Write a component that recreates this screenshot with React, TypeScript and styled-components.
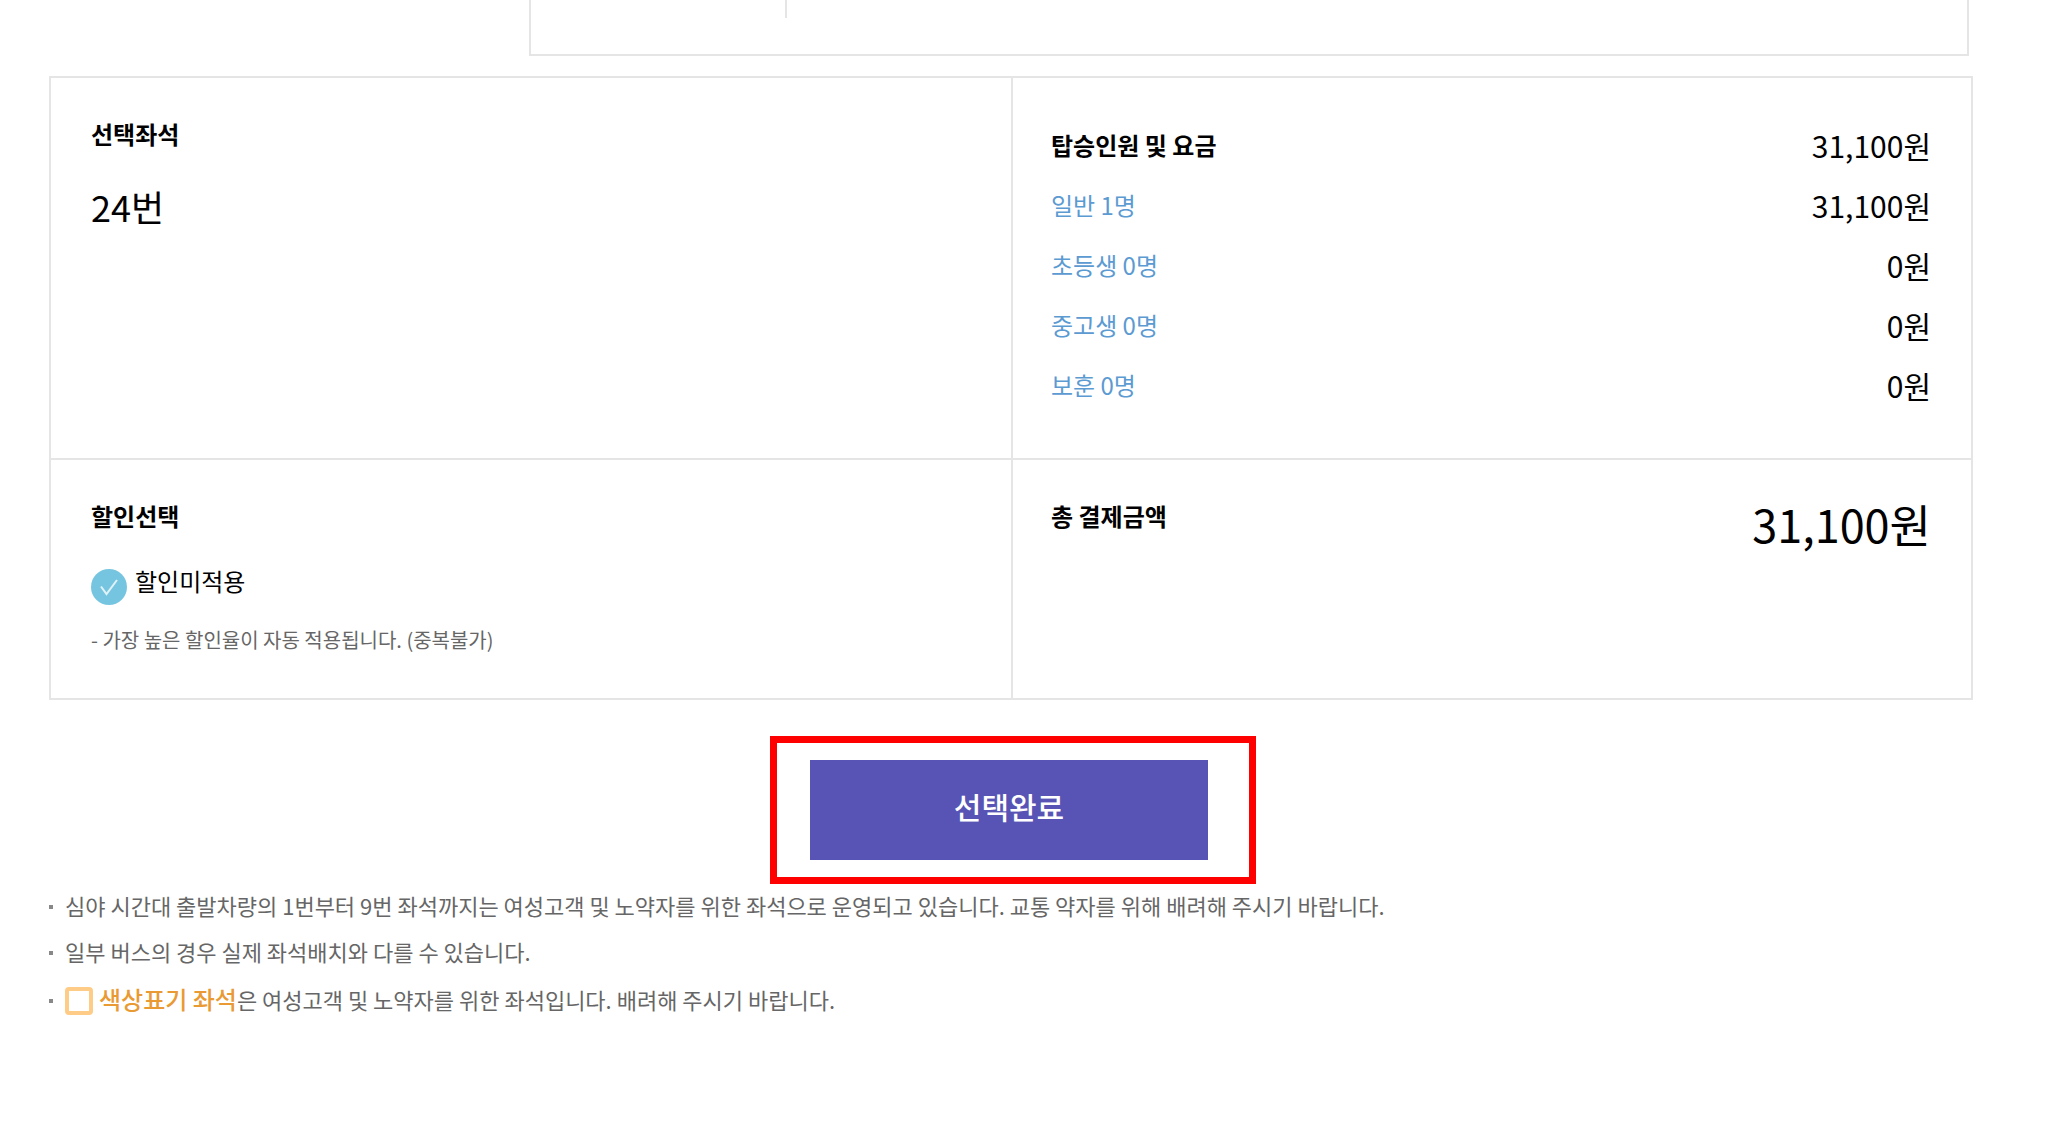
import React from "react";
import styled, { createGlobalStyle } from "styled-components";

const line = "#e5e5e5";

const GlobalStyle = createGlobalStyle`
  *, *::before, *::after { box-sizing: border-box; }
  body {
    margin: 0;
    background: #fff;
    color: #000;
    font-family: "Noto Sans CJK KR", "Noto Sans", sans-serif;
    font-size: 24px;
  }
`;

const Page = styled.main`
  padding: 0 75px 40px 49px;
`;

const SeatArea = styled.section`
  display: flex;
  height: 56px;
  margin: 0 4px 20px 480px;
  border: 2px solid ${line};
  border-top: 0;
`;

const SeatColumn = styled.div`
  width: 256px;
  height: 18px;
  border-right: 2px solid ${line};
`;

const Summary = styled.section`
  display: grid;
  grid-template-columns: 1fr 1fr;
  border: 2px solid ${line};
`;

const Cell = styled.div<{ $top?: boolean; $right?: boolean; $split?: boolean }>`
  display: ${(p) => (p.$split ? "flex" : "block")};
  justify-content: space-between;
  align-items: flex-start;
  padding: 38px 40px 42px ${(p) => (p.$right ? 38 : 40)}px;
  border-bottom: ${(p) => (p.$top ? `2px solid ${line}` : "0")};
  border-left: ${(p) => (p.$right ? `2px solid ${line}` : "0")};
`;

const Title = styled.h2`
  margin: 0;
  font-size: 24px;
  line-height: 36px;
  font-weight: 700;
`;

const Seat = styled.p`
  margin: 28px 0 0;
  font-size: 36px;
  line-height: 52px;
`;

const FareTable = styled.table`
  width: 100%;
  border-collapse: collapse;
`;

const FareRow = styled.tr<{ $total?: boolean }>`
  height: 60px;
  th,
  td {
    padding: 0 0 2px;
    line-height: 36px;
  }
  th {
    text-align: left;
    font-size: 24px;
    font-weight: ${(p) => (p.$total ? 700 : 400)};
    color: ${(p) => (p.$total ? "#000" : "#5c9ad2")};
  }
  td {
    text-align: right;
    font-size: 30px;
  }
`;

const Option = styled.label`
  display: flex;
  gap: 8px;
  width: max-content;
  height: 42px;
  margin-top: 29px;
  line-height: 36px;
  cursor: pointer;
`;

const OptionInput = styled.input`
  position: absolute;
  width: 36px;
  height: 36px;
  margin: 0;
  opacity: 0;
`;

const OptionMark = styled.svg`
  align-self: flex-end;
  width: 36px;
  height: 36px;
`;

const Hint = styled.p`
  margin: 19px 0 0;
  font-size: 20px;
  line-height: 32px;
  color: #666;
`;

const Total = styled.strong`
  font-size: 45px;
  line-height: 52px;
  font-weight: 400;
`;

const Actions = styled.div`
  display: flex;
  justify-content: center;
  margin-top: 60px;
  padding-right: 4px;
`;

const Highlight = styled.div`
  position: relative;
  &::after {
    content: "";
    position: absolute;
    inset: -24px -48px -24px -40px;
    border: 7px solid #f00;
    pointer-events: none;
  }
`;

const Submit = styled.button`
  display: block;
  width: 398px;
  height: 100px;
  padding: 0 0 8px;
  border: 0;
  background: #5754b5;
  color: #fff;
  font-family: inherit;
  font-size: 30px;
  font-weight: 500;
  cursor: pointer;
`;

const Notices = styled.ul`
  margin: 22px 0 0;
  padding: 0;
  list-style: none;
  font-size: 22px;
  color: #666;
`;

const Notice = styled.li<{ $tall?: boolean }>`
  display: flex;
  align-items: center;
  line-height: ${(p) => (p.$tall ? 50 : 46)}px;
  &::before {
    content: "";
    flex: none;
    width: 4px;
    height: 4px;
    margin: 4px 12px 0 0;
    background: #888;
  }
`;

const Swatch = styled.span`
  flex: none;
  width: 28px;
  height: 28px;
  margin: 4px 6px 0 0;
  border: 4px solid #ffcc87;
  border-radius: 4px;
`;

const Accent = styled.em`
  font-style: normal;
  font-weight: 500;
  font-size: 24px;
  color: #e99a33;
`;

const fares = [
  { label: "탑승인원 및 요금", price: "31,100원", total: true },
  { label: "일반 1명", price: "31,100원" },
  { label: "초등생 0명", price: "0원" },
  { label: "중고생 0명", price: "0원" },
  { label: "보훈 0명", price: "0원" },
];

export default function App() {
  return (
    <>
      <GlobalStyle />
      <Page>
        <SeatArea>
          <SeatColumn />
        </SeatArea>

        <Summary>
          <Cell $top>
            <Title>선택좌석</Title>
            <Seat>24번</Seat>
          </Cell>
          <Cell $top $right>
            <FareTable>
              <tbody>
                {fares.map((f) => (
                  <FareRow key={f.label} $total={f.total}>
                    <th scope="row">{f.label}</th>
                    <td>{f.price}</td>
                  </FareRow>
                ))}
              </tbody>
            </FareTable>
          </Cell>
          <Cell>
            <Title>할인선택</Title>
            <Option htmlFor="no-discount">
              <OptionInput type="radio" id="no-discount" name="discount" defaultChecked />
              <OptionMark viewBox="0 0 36 36" aria-hidden="true">
                <circle cx="18" cy="18" r="18" fill="#76c5e0" />
                <path d="M10 17.5 L15.5 25 L26 11" fill="none" stroke="#dff2f8" strokeWidth="2" />
              </OptionMark>
              할인미적용
            </Option>
            <Hint>- 가장 높은 할인율이 자동 적용됩니다. (중복불가)</Hint>
          </Cell>
          <Cell $right $split>
            <Title>총 결제금액</Title>
            <Total>31,100원</Total>
          </Cell>
        </Summary>

        <Actions>
          <Highlight>
            <Submit type="button">선택완료</Submit>
          </Highlight>
        </Actions>

        <Notices>
          <Notice>
            심야 시간대 출발차량의 1번부터 9번 좌석까지는 여성고객 및 노약자를 위한 좌석으로 운영되고 있습니다. 교통 약자를 위해 배려해 주시기 바랍니다.
          </Notice>
          <Notice>일부 버스의 경우 실제 좌석배치와 다를 수 있습니다.</Notice>
          <Notice $tall>
            <Swatch />
            <span>
              <Accent>색상표기 좌석</Accent>은 여성고객 및 노약자를 위한 좌석입니다. 배려해 주시기 바랍니다.
            </span>
          </Notice>
        </Notices>
      </Page>
    </>
  );
}
